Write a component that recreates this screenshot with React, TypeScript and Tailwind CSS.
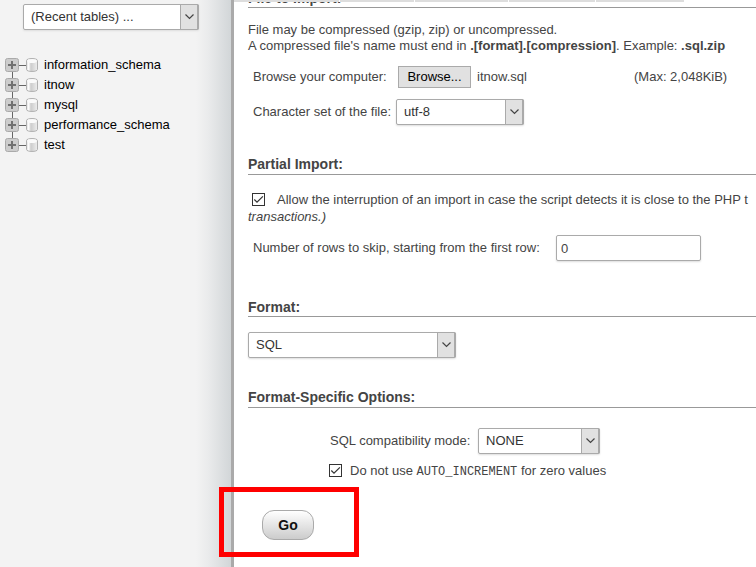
import type { ReactNode } from "react";

const databases = ["information_schema", "itnow", "mysql", "performance_schema", "test"];

type DropdownProps = { id: string; label?: string; value: string; className: string };

function Dropdown({ id, label, value, className }: DropdownProps) {
  return (
    <div className={`relative h-[26px] ${className}`}>
      <select
        id={id}
        aria-label={label}
        defaultValue={value}
        className="h-full w-full appearance-none rounded-[2px] border border-[#aaa] bg-white pl-[7px] pr-5 text-[13px] text-[#333] shadow-[0_1px_2px_#ddd]"
      >
        <option value={value}>{value}</option>
      </select>
      <span className="pointer-events-none absolute inset-y-0 right-0 flex w-[19px] items-center justify-center rounded-r-[2px] border border-r-2 border-[#aaa] bg-[#e1e1e1]">
        <svg width="9" height="6" viewBox="0 0 9 6" fill="none" stroke="#444" strokeWidth="1.2">
          <path d="M0.5 0.5 4.5 4.5 8.5 0.5" />
        </svg>
      </span>
    </div>
  );
}

function Tick({ id }: { id: string }) {
  return (
    <span className="relative inline-block size-[13px] shrink-0">
      <input
        id={id}
        type="checkbox"
        defaultChecked
        className="peer block size-[13px] appearance-none border border-[#333] bg-white"
      />
      <svg
        className="pointer-events-none absolute inset-0 hidden peer-checked:block"
        width="13"
        height="13"
        viewBox="0 0 13 13"
        fill="none"
        stroke="#333"
        strokeWidth="1.2"
      >
        <path d="M2.3 6.5 5 9.2 10.9 3.3" />
      </svg>
    </span>
  );
}

function Heading({ children, className }: { children: ReactNode; className: string }) {
  return (
    <h2 className={`border-b border-[#999] text-[14px] leading-4 font-bold ${className}`}>
      {children}
    </h2>
  );
}

function PlusIcon() {
  return (
    <svg width="14" height="14" viewBox="0 0 14 14" className="shrink-0">
      <rect x="0.5" y="0.5" width="13" height="13" rx="2" fill="#ccc" stroke="#aaa" />
      <path d="M3 7H11M7 3V11" stroke="#707070" strokeWidth="2" />
    </svg>
  );
}

function DatabaseIcon() {
  return (
    <svg width="12" height="14" viewBox="0 0 12 14" className="shrink-0">
      <defs>
        <linearGradient id="cylinder">
          <stop offset="0" stopColor="#ddd" />
          <stop offset="0.2" stopColor="#fff" />
          <stop offset="0.4" stopColor="#ccc" />
          <stop offset="0.75" stopColor="#e0e0e0" />
          <stop offset="1" stopColor="#eee" />
        </linearGradient>
      </defs>
      <path
        d="M0.5 2.5C0.5 -0.1 11.5 -0.1 11.5 2.5V11.5C11.5 14.1 0.5 14.1 0.5 11.5Z"
        fill="url(#cylinder)"
        stroke="#b0b0b0"
      />
      <ellipse cx="6" cy="3.1" rx="4.8" ry="2" fill="#fafafa" />
    </svg>
  );
}

export default function App() {
  return (
    <div className="flex h-screen overflow-hidden bg-white font-['Liberation_Sans',Arial,sans-serif] text-[13px] text-[#444]">
      <aside className="w-[231px] shrink-0 bg-[linear-gradient(to_right,#f3f3f3_196px,#eaebec_208px,#d2d6d8_231px)] pt-1">
        <Dropdown id="recent" label="Recent tables" value="(Recent tables) ..." className="ml-[23px] w-[176px]" />
        <ul className="mt-[25px] pl-[5px]">
          {databases.map((name, i) => (
            <li key={name} className="flex h-5 items-center">
              <span className="flex h-5 flex-col items-center">
                <span className={`h-[3px] w-px ${i > 0 ? "bg-[#666]" : ""}`} />
                <PlusIcon />
                <span className={`h-[3px] w-px ${i < databases.length - 1 ? "bg-[#666]" : ""}`} />
              </span>
              <span className="h-px w-[7px] bg-[#666]" />
              <DatabaseIcon />
              <a href="#" className="ml-1.5 leading-5 text-black">
                {name}
              </a>
            </li>
          ))}
        </ul>
      </aside>

      <main className="relative min-w-0 flex-1 overflow-hidden border-l-[3px] border-[#aaa] pl-3.5 whitespace-nowrap">
        <div className="absolute top-0 left-0 z-10 flex h-[2px] gap-px bg-white">
          <span className="w-[105px] bg-[#ddd]" />
          <span className="w-[74px] bg-[#ddd]" />
          <span className="w-[93px] bg-[#ddd]" />
          <span className="w-[86px] bg-[#ddd]" />
          <span className="w-[88px] bg-[#ddd]" />
        </div>

        <Heading className="-mt-[10px] pb-px">File to Import:</Heading>
        <p className="mt-3.5 leading-4">
          File may be compressed (gzip, zip) or uncompressed.
          <br />
          A compressed file's name must end in <b>.[format].[compression]</b>. Example: <b>.sql.zip</b>
        </p>
        <div className="mt-3 flex h-[22px] items-center pl-[5px]">
          <label htmlFor="browse" className="w-[145px]">Browse your computer:</label>
          <button
            id="browse"
            type="button"
            className="h-[22px] w-[73px] border border-[#aaa] bg-[#e1e1e1] text-black"
          >
            Browse...
          </button>
          <span className="ml-1.5 w-[157px]">itnow.sql</span>
          <span>(Max: 2,048KiB)</span>
        </div>
        <div className="mt-[11px] flex items-center pl-[5px]">
          <label htmlFor="charset" className="w-[143px]">Character set of the file:</label>
          <Dropdown id="charset" value="utf-8" className="w-[128px]" />
        </div>

        <Heading className="mt-[31px] pb-[2px]">Partial Import:</Heading>
        <div className="mt-4 leading-[17px]">
          <div className="flex items-center pl-1">
            <Tick id="interrupt" />
            <label htmlFor="interrupt" className="ml-3">
              Allow the interruption of an import in case the script detects it is close to the PHP t
            </label>
          </div>
          <em>transactions.)</em>
        </div>
        <div className="mt-2.5 flex items-center pl-[5px]">
          <label htmlFor="skip" className="w-[303px]">Number of rows to skip, starting from the first row:</label>
          <input
            id="skip"
            type="text"
            defaultValue="0"
            className="h-[26px] w-[145px] rounded-[2px] border border-[#aaa] bg-white px-1 shadow-[0_1px_2px_#ddd]"
          />
        </div>

        <Heading className="mt-[38px] pb-px">Format:</Heading>
        <Dropdown id="format" label="Format" value="SQL" className="mt-[15px] w-[208px]" />

        <Heading className="mt-[31px] pb-[2px]">Format-Specific Options:</Heading>
        <div className="mt-5 flex items-center pl-[82px]">
          <label htmlFor="compat" className="w-[148px]">SQL compatibility mode:</label>
          <Dropdown id="compat" value="NONE" className="w-[122px]" />
        </div>
        <div className="mt-2 flex h-[17px] items-center pl-[81px]">
          <Tick id="zero" />
          <label htmlFor="zero" className="ml-2">
            Do not use <code className="font-['Liberation_Mono',monospace] text-[12px]">AUTO_INCREMENT</code> for zero values
          </label>
        </div>
        <button
          type="button"
          className="mt-[31px] ml-3.5 block h-[30px] w-[52px] rounded-[12px] border border-[#aaa] bg-linear-to-b from-white to-[#ccc] text-[14px] font-bold text-[#111]"
        >
          Go
        </button>
      </main>

      <div className="pointer-events-none absolute top-[487px] left-[219px] z-20 h-[70px] w-[140px] border-[5px] border-[#f00]" />
    </div>
  );
}
